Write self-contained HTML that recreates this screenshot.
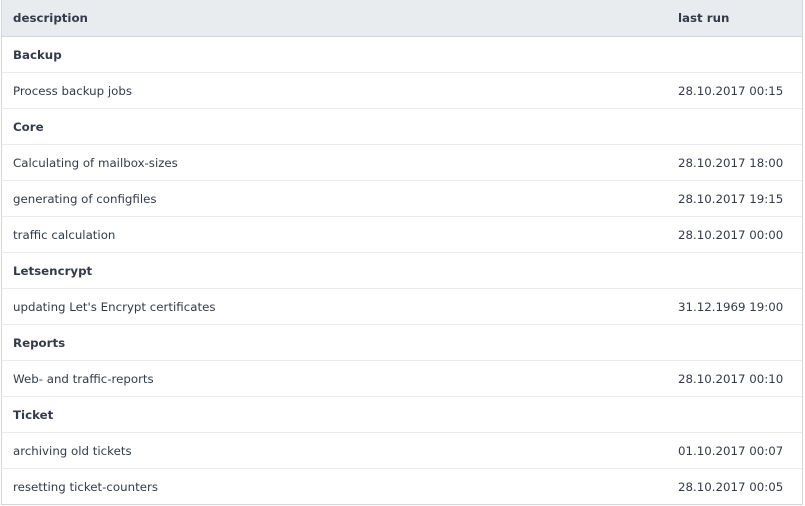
<!DOCTYPE html>
<html><head><style>
body{margin:0;background:#fff;font-family:"DejaVu Sans",sans-serif;font-size:11.8px;color:#343a4a;}
.t{position:absolute;left:1px;top:0;width:802px;height:505px;border:1px solid #d3d7dc;border-top:none;box-sizing:border-box;}
.r{height:36px;border-bottom:1px solid #e9ebee;box-sizing:border-box;position:relative;}
.r span{position:absolute;top:11px;left:11px;}
.r span.d{left:676px;}
.h{height:37px;background:#e9ecef;border-bottom:1px solid #d3d7dc;font-weight:bold;}
.g{font-weight:bold;}
.r:last-child{border-bottom:none;}
</style></head><body>
<div class="t">
<div class="r h"><span>description</span><span class="d">last run</span></div>
<div class="r g"><span>Backup</span></div>
<div class="r"><span>Process backup jobs</span><span class="d">28.10.2017 00:15</span></div>
<div class="r g"><span>Core</span></div>
<div class="r"><span>Calculating of mailbox-sizes</span><span class="d">28.10.2017 18:00</span></div>
<div class="r"><span>generating of configfiles</span><span class="d">28.10.2017 19:15</span></div>
<div class="r"><span>traffic calculation</span><span class="d">28.10.2017 00:00</span></div>
<div class="r g"><span>Letsencrypt</span></div>
<div class="r"><span>updating Let's Encrypt certificates</span><span class="d">31.12.1969 19:00</span></div>
<div class="r g"><span>Reports</span></div>
<div class="r"><span>Web- and traffic-reports</span><span class="d">28.10.2017 00:10</span></div>
<div class="r g"><span>Ticket</span></div>
<div class="r"><span>archiving old tickets</span><span class="d">01.10.2017 00:07</span></div>
<div class="r"><span>resetting ticket-counters</span><span class="d">28.10.2017 00:05</span></div>
</div>
</body></html>
